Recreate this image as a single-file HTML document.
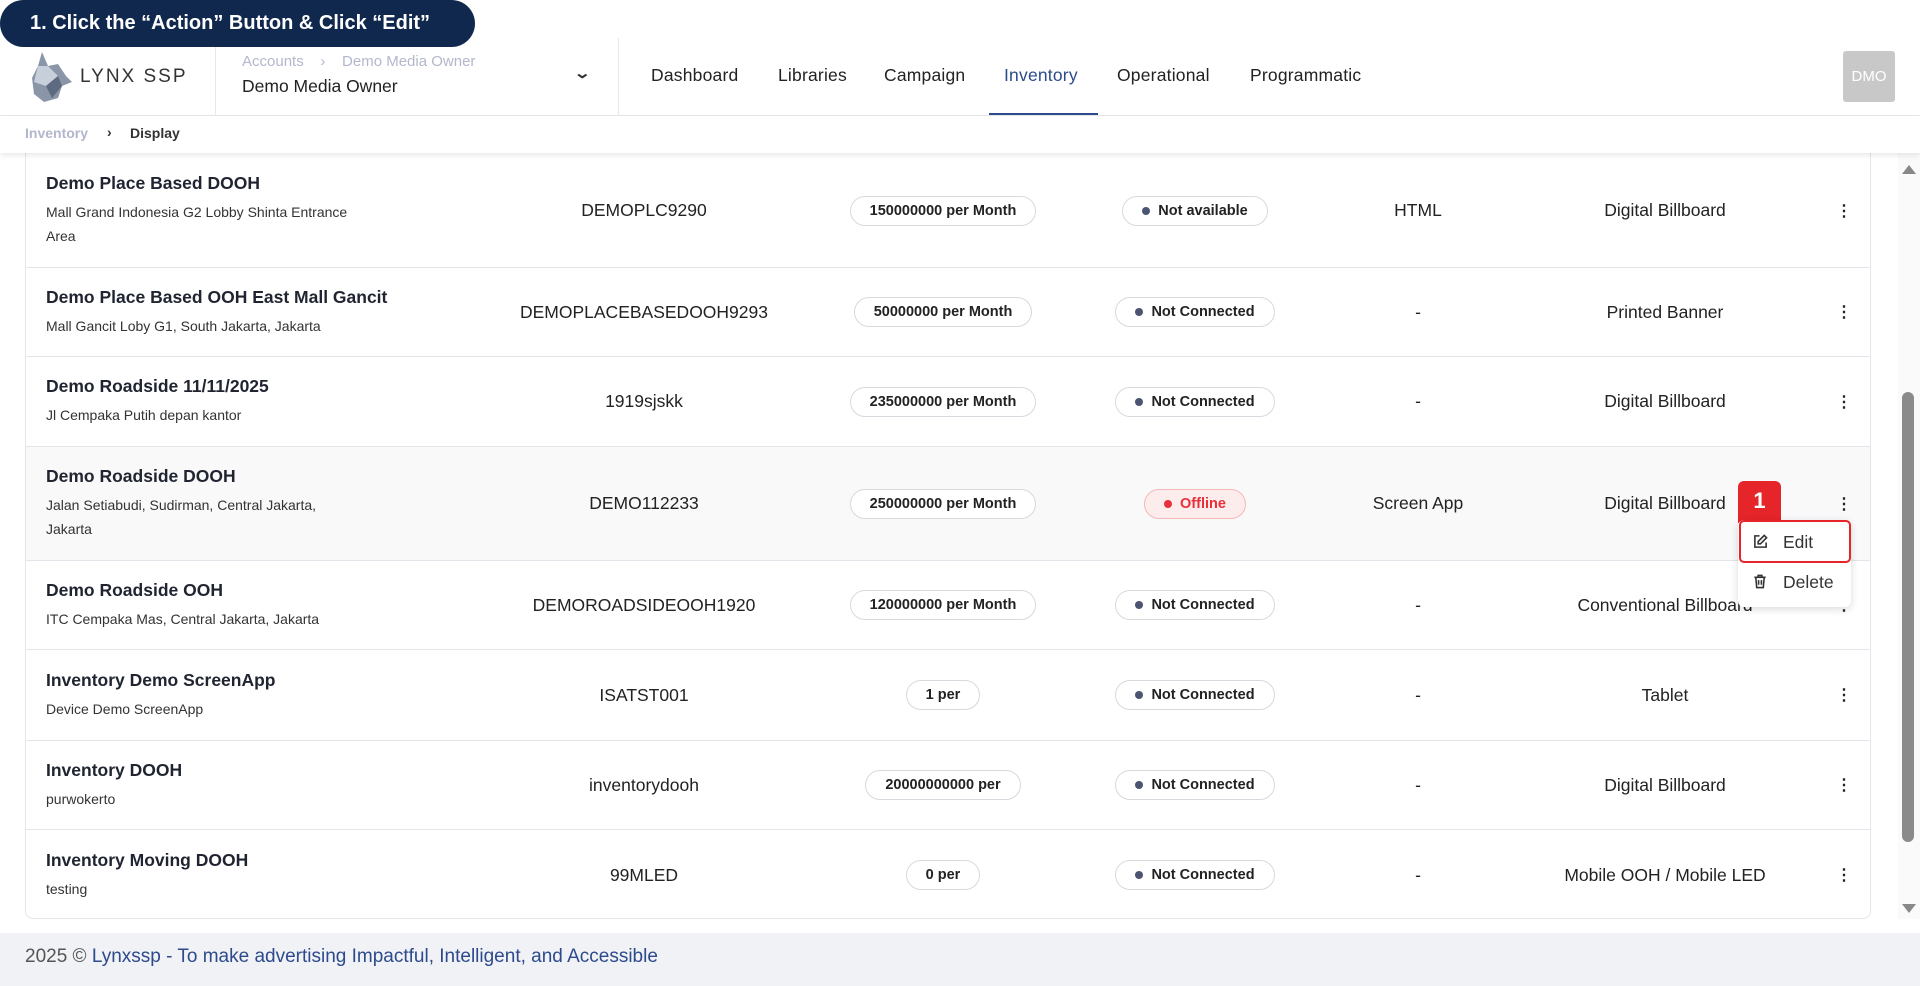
<!DOCTYPE html>
<html><head><meta charset="utf-8"><style>
*{box-sizing:border-box;margin:0;padding:0}
body{width:1920px;height:986px;overflow:hidden;background:#fff;font-family:"Liberation Sans",sans-serif;color:#1f2430;position:relative}
.abs{position:absolute}
.banner{left:0;top:0;width:475px;height:47px;background:#10284e;border-radius:24px;color:#fff;font-weight:bold;font-size:20px;line-height:47px;padding-left:30px;z-index:5}
.hdr{left:0;top:0;width:1920px;height:116px;border-bottom:1px solid #e5e7eb;background:#fff;z-index:3}
.nav{top:65px;font-size:17.5px;color:#222;z-index:4;letter-spacing:.2px}
.bc{left:0;top:116px;width:1920px;height:37px;background:#fff;box-shadow:0 3px 5px rgba(0,0,0,.08);font-size:14px;font-weight:bold;z-index:3}
.box{left:25px;top:140px;width:1846px;height:779px;border:1px solid #e3e5ea;border-radius:8px;background:#fff;overflow:hidden}
.row{position:absolute;left:0;width:1846px;border-bottom:1px solid #e3e5ea}
.cell{position:absolute;top:0;height:100%;display:flex;align-items:center;justify-content:center;font-size:17.5px;color:#222}
.name{left:20px;width:380px;flex-direction:column;align-items:flex-start;justify-content:center}
.name b{font-size:17.5px;font-weight:600;color:#1f2430;margin-bottom:6px}
.name span{font-size:14px;color:#333;line-height:24px}
.pill{border:1px solid #d6d9de;border-radius:16px;height:30px;padding:0 19px;font-size:14.5px;font-weight:600;display:flex;align-items:center;color:#222;background:#fff}
.dot{width:8px;height:8px;border-radius:50%;background:#4b5470;margin-right:8px}
.off{background:#fdecec;border-color:#f6b8b8;color:#e8303a}
.off .dot{background:#e8303a}
.dots{font-size:16px;font-weight:bold}
.hz{z-index:4}
</style></head><body>
<div class="abs banner">1. Click the “Action” Button &amp; Click “Edit”</div>
<div class="abs hdr"></div>
<svg class="abs hz" style="left:32px;top:52px" width="40" height="50" viewBox="0 0 40 50"><polygon points="10,0 16,14 26,12 34,24 40,30 30,34 26,46 12,50 2,42 0,26 6,14" fill="#8a95a8"/><polygon points="6,14 16,14 26,24 14,34 2,30" fill="#c7cfdb"/><polygon points="14,34 26,24 30,34 20,46" fill="#5d6a80"/></svg>
<div class="abs hz" style="left:80px;top:66px;font-size:19px;letter-spacing:2px;color:#333">LYNX SSP</div>
<div class="abs hz" style="left:215px;top:38px;width:1px;height:78px;background:#e5e7eb"></div>
<div class="abs hz" style="left:242px;top:53px;font-size:15px;color:#b3b7cc">Accounts &nbsp;&nbsp;&nbsp;›&nbsp;&nbsp;&nbsp; Demo Media Owner</div>
<div class="abs hz" style="left:242px;top:76px;font-size:17.5px;color:#222">Demo Media Owner</div>
<div class="abs hz" style="left:576px;top:64px;font-size:15px;font-weight:bold;color:#333;transform:scaleX(1.4)">⌄</div>
<div class="abs hz" style="left:618px;top:38px;width:1px;height:78px;background:#e5e7eb"></div>
<div class="abs nav" style="left:651px">Dashboard</div>
<div class="abs nav" style="left:778px">Libraries</div>
<div class="abs nav" style="left:884px">Campaign</div>
<div class="abs nav" style="left:1004px;color:#2c4a8c">Inventory</div>
<div class="abs hz" style="left:989px;top:113px;width:109px;height:2px;background:#2c4a8c"></div>
<div class="abs nav" style="left:1117px">Operational</div>
<div class="abs nav" style="left:1250px">Programmatic</div>
<div class="abs hz" style="left:1843px;top:51px;width:52px;height:51px;background:#c8c8c8;border-radius:3px;color:#fff;font-size:15px;text-align:center;line-height:51px">DMO</div>
<div class="abs bc"><span class="abs" style="left:25px;top:9px;color:#b3b7cc">Inventory</span><span class="abs" style="left:107px;top:8px;color:#333">›</span><span class="abs" style="left:130px;top:9px;color:#333">Display</span></div>

<div class="abs box">
<div class="row" style="top:13px;height:114px"><div class="cell name"><b>Demo Place Based DOOH</b><span>Mall Grand Indonesia G2 Lobby Shinta Entrance<br>Area</span></div><div class="cell" style="left:488px;width:260px">DEMOPLC9290</div><div class="cell" style="left:787px;width:260px"><div class="pill">150000000 per Month</div></div><div class="cell" style="left:1039px;width:260px"><div class="pill"><i class="dot"></i>Not available</div></div><div class="cell" style="left:1292px;width:200px">HTML</div><div class="cell" style="left:1489px;width:300px">Digital Billboard</div><div class="cell dots" style="left:1808px;width:20px">⋮</div></div>
<div class="row" style="top:127px;height:89px"><div class="cell name"><b>Demo Place Based OOH East Mall Gancit</b><span>Mall Gancit Loby G1, South Jakarta, Jakarta</span></div><div class="cell" style="left:488px;width:260px">DEMOPLACEBASEDOOH9293</div><div class="cell" style="left:787px;width:260px"><div class="pill">50000000 per Month</div></div><div class="cell" style="left:1039px;width:260px"><div class="pill"><i class="dot"></i>Not Connected</div></div><div class="cell" style="left:1292px;width:200px">-</div><div class="cell" style="left:1489px;width:300px">Printed Banner</div><div class="cell dots" style="left:1808px;width:20px">⋮</div></div>
<div class="row" style="top:216px;height:90px"><div class="cell name"><b>Demo Roadside 11/11/2025</b><span>Jl Cempaka Putih depan kantor</span></div><div class="cell" style="left:488px;width:260px">1919sjskk</div><div class="cell" style="left:787px;width:260px"><div class="pill">235000000 per Month</div></div><div class="cell" style="left:1039px;width:260px"><div class="pill"><i class="dot"></i>Not Connected</div></div><div class="cell" style="left:1292px;width:200px">-</div><div class="cell" style="left:1489px;width:300px">Digital Billboard</div><div class="cell dots" style="left:1808px;width:20px">⋮</div></div>
<div class="row" style="top:306px;height:114px;background:#f9f9fa"><div class="cell name"><b>Demo Roadside DOOH</b><span>Jalan Setiabudi, Sudirman, Central Jakarta,<br>Jakarta</span></div><div class="cell" style="left:488px;width:260px">DEMO112233</div><div class="cell" style="left:787px;width:260px"><div class="pill">250000000 per Month</div></div><div class="cell" style="left:1039px;width:260px"><div class="pill off"><i class="dot"></i>Offline</div></div><div class="cell" style="left:1292px;width:200px">Screen App</div><div class="cell" style="left:1489px;width:300px">Digital Billboard</div><div class="cell dots" style="left:1808px;width:20px">⋮</div></div>
<div class="row" style="top:420px;height:89px"><div class="cell name"><b>Demo Roadside OOH</b><span>ITC Cempaka Mas, Central Jakarta, Jakarta</span></div><div class="cell" style="left:488px;width:260px">DEMOROADSIDEOOH1920</div><div class="cell" style="left:787px;width:260px"><div class="pill">120000000 per Month</div></div><div class="cell" style="left:1039px;width:260px"><div class="pill"><i class="dot"></i>Not Connected</div></div><div class="cell" style="left:1292px;width:200px">-</div><div class="cell" style="left:1489px;width:300px">Conventional Billboard</div><div class="cell dots" style="left:1808px;width:20px">⋮</div></div>
<div class="row" style="top:509px;height:91px"><div class="cell name"><b>Inventory Demo ScreenApp</b><span>Device Demo ScreenApp</span></div><div class="cell" style="left:488px;width:260px">ISATST001</div><div class="cell" style="left:787px;width:260px"><div class="pill">1 per</div></div><div class="cell" style="left:1039px;width:260px"><div class="pill"><i class="dot"></i>Not Connected</div></div><div class="cell" style="left:1292px;width:200px">-</div><div class="cell" style="left:1489px;width:300px">Tablet</div><div class="cell dots" style="left:1808px;width:20px">⋮</div></div>
<div class="row" style="top:600px;height:89px"><div class="cell name"><b>Inventory DOOH</b><span>purwokerto</span></div><div class="cell" style="left:488px;width:260px">inventorydooh</div><div class="cell" style="left:787px;width:260px"><div class="pill">20000000000 per</div></div><div class="cell" style="left:1039px;width:260px"><div class="pill"><i class="dot"></i>Not Connected</div></div><div class="cell" style="left:1292px;width:200px">-</div><div class="cell" style="left:1489px;width:300px">Digital Billboard</div><div class="cell dots" style="left:1808px;width:20px">⋮</div></div>
<div class="row" style="top:689px;height:90px;border-bottom:none"><div class="cell name"><b>Inventory Moving DOOH</b><span>testing</span></div><div class="cell" style="left:488px;width:260px">99MLED</div><div class="cell" style="left:787px;width:260px"><div class="pill">0 per</div></div><div class="cell" style="left:1039px;width:260px"><div class="pill"><i class="dot"></i>Not Connected</div></div><div class="cell" style="left:1292px;width:200px">-</div><div class="cell" style="left:1489px;width:300px">Mobile OOH / Mobile LED</div><div class="cell dots" style="left:1808px;width:20px">⋮</div></div>
</div>

<div class="abs" style="left:1738px;top:481px;width:43px;height:42px;background:#e5252a;border-radius:6px 6px 0 0;color:#fff;font-weight:bold;font-size:22px;text-align:center;line-height:40px">1</div>
<div class="abs" style="left:1738px;top:520px;width:113px;height:87px;background:#fff;border-radius:6px;box-shadow:0 2px 8px rgba(0,0,0,.15)"></div>
<div class="abs" style="left:1739px;top:520px;width:112px;height:43px;border:2px solid #e5252a;border-radius:5px"></div>
<svg class="abs" style="left:1753px;top:534px" width="15" height="15" viewBox="0 0 16 16" fill="none" stroke="#333" stroke-width="1.7"><path d="M7 2H2v12h12V9"/><path d="M12 1.5l2.5 2.5L8 10.5H5.5V8z"/></svg>
<div class="abs" style="left:1783px;top:532px;font-size:17.5px;color:#333">Edit</div>
<svg class="abs" style="left:1753px;top:574px" width="14" height="15" viewBox="0 0 14 16" fill="none" stroke="#333" stroke-width="1.7"><path d="M1 3.5h12M5 3.5V1.5h4v2M2.5 3.5l1 11h7l1-11M5.5 6.5v5M8.5 6.5v5"/></svg>
<div class="abs" style="left:1783px;top:572px;font-size:17.5px;color:#333">Delete</div>

<div class="abs" style="left:1898px;top:153px;width:22px;height:766px;background:#fafafa"></div>
<div class="abs" style="left:1902px;top:165px;width:0;height:0;border-left:7px solid transparent;border-right:7px solid transparent;border-bottom:9px solid #888"></div>
<div class="abs" style="left:1902px;top:392px;width:12px;height:450px;background:#8a8a8a;border-radius:6px"></div>
<div class="abs" style="left:1902px;top:904px;width:0;height:0;border-left:7px solid transparent;border-right:7px solid transparent;border-top:9px solid #888"></div>

<div class="abs" style="left:0;top:933px;width:1920px;height:53px;background:#f1f2f5;font-size:19px;color:#555;padding:13px 0 0 25px">2025 © <span style="color:#2c4a8c">Lynxssp</span> <span style="color:#2c4a8c">- To make advertising Impactful, Intelligent, and Accessible</span></div>
</body></html>
